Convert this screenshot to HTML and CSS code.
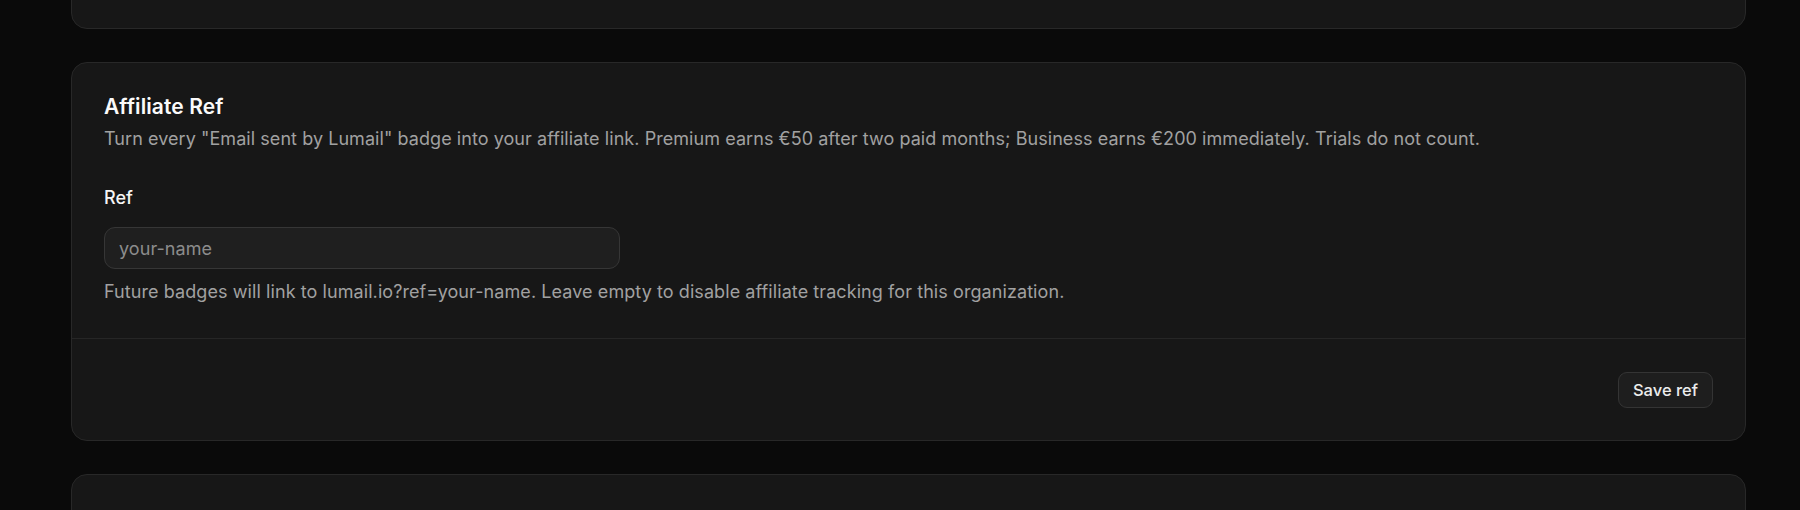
FILE: index.html
```html
<!DOCTYPE html>
<html lang="en">
<head>
<meta charset="utf-8">
<title>Affiliate Ref</title>
<link rel="stylesheet" href="styles.css">
</head>
<body>
<main class="page">
  <section class="card card-prev"></section>

  <section class="card">
    <div class="card-body">
      <h2 class="card-title">Affiliate Ref</h2>
      <p class="card-desc">Turn every "Email sent by Lumail" badge into your affiliate link. Premium earns €50 after two paid months; Business earns €200 immediately. Trials do not count.</p>
      <div class="field">
        <label class="field-label" for="ref">Ref</label>
        <input class="field-input" id="ref" type="text" placeholder="your-name">
        <p class="field-help">Future badges will link to lumail.io?ref=your-name. Leave empty to disable affiliate tracking for this organization.</p>
      </div>
    </div>
    <div class="card-footer">
      <button class="btn" type="button">Save ref</button>
    </div>
  </section>

  <section class="card card-next"></section>
</main>
</body>
</html>
```

FILE: styles.css
```css
* { box-sizing: border-box; }

html, body {
  margin: 0;
  padding: 0;
  background: #0a0a0a;
  height: 510px;
  overflow: hidden;
}

body {
  font-family: Inter, "Liberation Sans", sans-serif;
  color: #fafafa;
}

.page {
  display: flex;
  flex-direction: column;
  gap: 33px;
  padding: 0 54px 0 71px;
  margin-top: -72px;
}

.card {
  background: #171717;
  border: 1px solid #282828;
  border-radius: 16px;
}

.card-prev { height: 101px; }
.card-next { height: 120px; }

.card-body {
  padding: 30px 32px 32px 32px;
}

.card-title {
  margin: 0;
  font-size: 21px;
  line-height: 28px;
  font-weight: 600;
  letter-spacing: 0.1px;
  color: #fafafa;
}

.card-desc {
  margin: 4px 0 0;
  font-size: 18px;
  line-height: 28px;
  letter-spacing: 0.06px;
  color: #a1a1a1;
}

.field {
  display: flex;
  flex-direction: column;
  margin-top: 32px;
}

.field-label {
  font-size: 18px;
  line-height: 26px;
  font-weight: 500;
  color: #f5f5f5;
}

.field-input {
  margin-top: 16px;
  width: 516px;
  height: 42px;
  padding: 0 14px;
  background: #1f1f1f;
  border: 1px solid #363636;
  border-radius: 11px;
  color: #e5e5e5;
  font-family: inherit;
  font-size: 18px;
  letter-spacing: 0.06px;
  outline: none;
}

.field-input::placeholder { color: #8c8c8c; }

.field-help {
  margin: 9px 0 0;
  font-size: 18px;
  line-height: 28px;
  letter-spacing: 0.08px;
  color: #a1a1a1;
}

.card-footer {
  display: flex;
  justify-content: flex-end;
  padding: 33px 32px 32px;
  border-top: 1px solid #262626;
}

.btn {
  height: 36px;
  padding: 0 14px;
  background: #1e1e1e;
  border: 1px solid #343434;
  border-radius: 9px;
  color: #ececec;
  font-family: inherit;
  font-size: 16.5px;
  font-weight: 500;
  cursor: pointer;
}
```
